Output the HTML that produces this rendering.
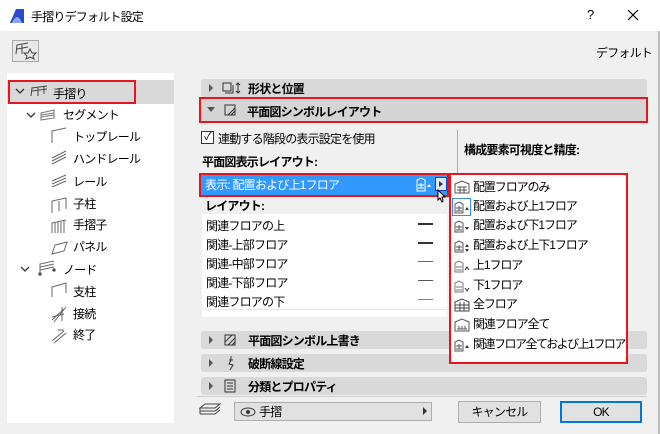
<!DOCTYPE html>
<html><head><meta charset="utf-8"><style>
*{margin:0;padding:0;box-sizing:border-box}
body{width:660px;height:434px;overflow:hidden;background:#f0f0f0;font-family:"Liberation Sans","Noto Sans CJK JP",sans-serif;font-size:12px;color:#000;position:relative;letter-spacing:-0.8px}
.a{position:absolute;white-space:nowrap}
.b{font-weight:bold}
.hdr{position:absolute;left:201px;width:446px;height:18px;background:#d9d9d9;border-radius:3px}
.hdr .t{position:absolute;left:47px;top:1px;font-weight:bold;font-size:12px}
.hdr .tri{position:absolute;left:8px;top:5px;width:0;height:0;border-left:4px solid #555;border-top:4px solid transparent;border-bottom:4px solid transparent}
.red{position:absolute;border:2px solid #e8141b}
.row{position:absolute;left:202px;width:245px;height:20px;background:#fff;border-bottom:1px solid #e6e6e6}
.row span{position:absolute;left:4px;top:3px}
.row i{position:absolute;left:216px;top:9px;width:15px;height:2px;background:#333}
.mi{position:absolute;left:473px;white-space:nowrap;z-index:6;letter-spacing:-1.1px}
.ic{position:absolute;left:454px;z-index:6}
</style></head><body>
<div class="a" style="left:0;top:0;width:660px;height:31px;background:#fff"></div>
<svg class="a" style="left:9px;top:8px" width="16" height="16"><path d="M1 15 L7 1 L15 1 L15 15 Z" fill="#2a4bd1"/><path d="M3 15 Q8 3 13 15Z" fill="#8aa8ff"/></svg>
<div class="a" style="left:31px;top:8px;font-size:12px">手摺りデフォルト設定</div>
<div class="a" style="left:587px;top:7px;font-size:13px">?</div>
<svg class="a" style="left:627px;top:9px" width="12" height="12"><path d="M1 1 L11 11 M11 1 L1 11" stroke="#000" stroke-width="1.2"/></svg>
<div class="a" style="left:658px;top:31px;width:2px;height:403px;background:#bbb"></div>
<div class="a" style="left:12px;top:40px;width:27px;height:22px;border:1px solid #aaa;background:#e8e8e8"></div>
<svg class="a" style="left:14px;top:42px" width="24" height="18" fill="none" stroke="#444"><path d="M2 12 L3 3 L14 1 M3 7 L14 5 M8 12 V3"/><path d="M16 7 L18 11 L22 11 L19 14 L20 17 L16 15 L12 17 L13 14 L10 11 L14 11Z"/></svg>
<div class="a" style="right:8px;top:44px">デフォルト</div>

<!-- left tree -->
<div class="a" style="left:7px;top:73px;width:167px;height:350px;background:#fff"></div>
<div class="a" style="left:7px;top:80px;width:167px;height:24px;background:#d9d9d9"></div>
<div class="red" style="left:8px;top:80px;width:128px;height:24px"></div>
<svg class="a" style="left:15px;top:88px" width="10" height="7"><path d="M1 1 L5 5 L9 1" stroke="#333" fill="none" stroke-width="1.3"/></svg>
<svg class="a" style="left:30px;top:85px" width="18" height="12"><path d="M1 11 L2 3 L17 1 M2 6 L17 4 M8 11 V3 M14 9 V2" stroke="#444" fill="none"/></svg>
<div class="a" style="left:53px;top:85px">手摺り</div>
<svg class="a" style="left:26px;top:112px" width="10" height="7"><path d="M1 1 L5 5 L9 1" stroke="#333" fill="none" stroke-width="1.3"/></svg>
<svg class="a" style="left:40px;top:109px" width="16" height="12"><path d="M1 4 L14 1 L14 9 L1 11Z M1 6 L14 4 M1 8 L14 6" stroke="#777" fill="none"/></svg>
<div class="a" style="left:63px;top:106px">セグメント</div>
<div class="a" style="left:73px;top:128px">トップレール</div>
<div class="a" style="left:73px;top:150px">ハンドレール</div>
<div class="a" style="left:73px;top:173px">レール</div>
<div class="a" style="left:73px;top:195px">子柱</div>
<div class="a" style="left:73px;top:216px">手摺子</div>
<div class="a" style="left:73px;top:238px">パネル</div>
<svg class="a" style="left:20px;top:266px" width="10" height="7"><path d="M1 1 L5 5 L9 1" stroke="#333" fill="none" stroke-width="1.3"/></svg>
<svg class="a" style="left:38px;top:260px" width="18" height="16" fill="none" stroke="#666"><path d="M2 14 V4 L16 1 M2 7 L16 4 M2 10 L16 7"/><circle cx="2" cy="14" r="1.3" fill="#333"/><circle cx="16" cy="10" r="1.3" fill="#333"/></svg>
<div class="a" style="left:63px;top:261px">ノード</div>
<div class="a" style="left:73px;top:283px">支柱</div>
<div class="a" style="left:73px;top:305px">接続</div>
<div class="a" style="left:73px;top:326px">終了</div>
<svg class="a" style="left:50px;top:127px" width="18" height="220" stroke="#666" fill="none">
<path d="M2 16 V4 L16 1"/>
<path d="M2 37 L16 30 M2 34 L16 27 M2 31 L16 24"/>
<path d="M2 60 L16 54 M2 57 L16 51 M2 54 L16 48"/>
<path d="M2 86 V74 L16 71 V82 M9 84 V74"/>
<path d="M2 106 V96 L16 93 M5 106 V96 M8 106 V95 M11 106 V95 M14 106 V94"/>
<path d="M2 127 L5 118 L17 115 L14 124 Z"/>
<path d="M2 170 V160 L16 156 V166"/>
<path d="M2 193 L14 182 M2 190 L14 187 M4 195 L16 180 M12 180 V194"/>
<path d="M2 214 L14 204 M4 216 L16 206 M8 203 L14 203"/>
</svg>

<!-- right -->
<div class="hdr" style="top:79px"><div class="tri"></div><div class="t" style="left:47px">形状と位置</div>
<svg class="a" style="left:20px;top:2px" width="22" height="14" fill="none" stroke="#333"><path d="M2 2 H10 V10 H2Z M4 12 H12 V4"/><path d="M17 2 V12 M15 4 L17 2 L19 4 M15 10 L17 12 L19 10"/></svg></div>
<div class="a" style="left:199px;top:97px;width:449px;height:26px;background:#d4d4d4"></div>
<div class="red" style="left:199px;top:97px;width:449px;height:26px"></div>
<div class="a" style="left:207px;top:107px;border-top:5px solid #555;border-left:4px solid transparent;border-right:4px solid transparent"></div>
<svg class="a" style="left:223px;top:103px" width="14" height="14"><path d="M2 2 H12 V12 H2Z M5 12 L12 5 M8 12 L12 8" stroke="#333" fill="none"/></svg>
<div class="a b" style="left:247px;top:103px">平面図シンボルレイアウト</div>
<div class="a" style="left:201px;top:131px;width:13px;height:13px;border:1px solid #333;background:#fff;font-size:11px;line-height:11px;text-align:center">✓</div>
<div class="a" style="left:218px;top:130px">連動する階段の表示設定を使用</div>
<div class="a b" style="left:202px;top:153px">平面図表示レイアウト:</div>
<div class="a" style="left:200px;top:174px;width:248px;height:22px;background:#3399ff"></div>
<div class="red" style="left:199px;top:173px;width:250px;height:24px"></div>
<div class="a" style="left:205px;top:176px;color:#fff">表示: 配置および上1フロア</div>
<svg class="a" style="left:416px;top:177px" width="16" height="15"><path d="M1 14 V3 L5 1 L9 3 V14Z M2 8 H8 M2 11 H8 M5 6 V11" stroke="#fff" fill="none"/><path d="M11 10 L13 7 L15 10Z" fill="#fff"/></svg>
<div class="a" style="left:435px;top:177px;width:12px;height:14px;background:#dfe8f5;border:1px solid #14c"></div>
<div class="a" style="left:439px;top:181px;border-left:4px solid #333;border-top:3px solid transparent;border-bottom:3px solid transparent"></div>
<svg class="a" style="left:437px;top:189px;z-index:7" width="10" height="14"><path d="M1 1 V11 L3 9 L5 13 L6 12 L5 8 H8Z" fill="#fff" stroke="#000"/></svg>
<div class="a b" style="left:205px;top:197px">レイアウト:</div>
<div class="row" style="top:214px"><span>関連フロアの上</span><i></i></div>
<div class="row" style="top:233px"><span>関連-上部フロア</span><i></i></div>
<div class="row" style="top:252px"><span>関連-中部フロア</span><i style="height:1px;background:#666"></i></div>
<div class="row" style="top:271px"><span>関連-下部フロア</span><i style="height:1px;background:#555"></i></div>
<div class="row" style="top:290px"><span>関連フロアの下</span><i style="height:1px;background:#888"></i></div>
<div class="a" style="left:202px;top:310px;width:245px;height:7px;background:#fff"></div>
<div class="a" style="left:457px;top:130px;width:1px;height:196px;background:#aaa"></div>
<div class="a b" style="left:464px;top:141px">構成要素可視度と精度:</div>

<div class="a" style="left:449px;top:173px;width:179px;height:191px;background:#fff;border:2px solid #e8141b;z-index:5"></div>
<svg class="ic" style="top:180px" width="16" height="14"><path d="M1 13 V4 L8 1 L15 4 V13Z M3 10 H13 M3 7 H13 M6 7 V13 M10 7 V13" stroke="#555" fill="none"/></svg><div class="mi" style="top:178px">配置フロアのみ</div>
<div class="ic" style="top:198px;left:452px;width:19px;height:18px;border:1px solid #3a8ee6"></div>
<svg class="ic" style="top:200px" width="16" height="14"><path d="M1 13 V4 L5 2 L9 4 V13Z M2 8 H8 M2 11 H8 M5 6 V11" stroke="#555" fill="none"/><path d="M11 10 L13 7 L15 10Z" fill="#333"/></svg><div class="mi" style="top:197px">配置および上1フロア</div>
<svg class="ic" style="top:219px" width="16" height="14"><path d="M1 13 V4 L5 2 L9 4 V13Z M2 8 H8 M2 11 H8 M5 6 V11" stroke="#555" fill="none"/><path d="M11 8 L13 11 L15 8Z" fill="#333"/></svg><div class="mi" style="top:216px">配置および下1フロア</div>
<svg class="ic" style="top:239px" width="16" height="14"><path d="M1 13 V4 L5 2 L9 4 V13Z M2 8 H8 M2 11 H8 M5 6 V11" stroke="#555" fill="none"/><path d="M11 8 L13 5 L15 8Z M11 10 L13 13 L15 10Z" fill="#333"/></svg><div class="mi" style="top:236px">配置および上下1フロア</div>
<svg class="ic" style="top:259px" width="16" height="14"><path d="M1 13 V4 L5 2 L9 4 V13Z M2 8 H8 M2 11 H8" stroke="#777" fill="none"/><path d="M11 11 L13 8 L15 11" stroke="#333" fill="none"/></svg><div class="mi" style="top:256px">上1フロア</div>
<svg class="ic" style="top:279px" width="16" height="14"><path d="M1 13 V4 L5 2 L9 4 V13Z M2 8 H8 M2 11 H8" stroke="#777" fill="none"/><path d="M11 9 L13 12 L15 9" stroke="#333" fill="none"/></svg><div class="mi" style="top:276px">下1フロア</div>
<svg class="ic" style="top:298px" width="16" height="14"><path d="M1 13 V4 L8 1 L15 4 V13Z M1 7 H15 M1 10 H15 M6 4 V13 M10 4 V13" stroke="#444" fill="none"/></svg><div class="mi" style="top:295px">全フロア</div>
<svg class="ic" style="top:318px" width="16" height="14"><path d="M1 13 V4 L8 1 L15 4 V13Z M3 11 H13 M5 8 V11 M8 8 V11 M11 8 V11" stroke="#555" fill="none"/></svg><div class="mi" style="top:315px">関連フロア全て</div>
<svg class="ic" style="top:338px" width="16" height="14"><path d="M1 13 V4 L5 2 L9 4 V13Z M2 8 H8 M2 11 H8 M5 6 V11" stroke="#555" fill="none"/><path d="M11 10 L13 7 L15 10Z" fill="#333"/></svg><div class="mi" style="top:335px;letter-spacing:-1.5px">関連フロア全ておよび上1フロア</div>

<div class="hdr" style="top:331px"><div class="tri"></div><div class="t">平面図シンボル上書き</div>
<svg class="a" style="left:22px;top:2px" width="14" height="14"><path d="M2 2 H12 V12 H2Z M2 9 L9 2 M5 12 L12 5 M9 12 L12 9" stroke="#333" fill="none"/></svg></div>
<div class="hdr" style="top:354px"><div class="tri"></div><div class="t">破断線設定</div>
<svg class="a" style="left:24px;top:1px" width="12" height="16"><path d="M6 1 V5 M4 5 H8 M6 5 L4 9 L8 10 L5 15" stroke="#333" fill="none"/></svg></div>
<div class="hdr" style="top:377px"><div class="tri"></div><div class="t">分類とプロパティ</div>
<svg class="a" style="left:23px;top:2px" width="12" height="14"><path d="M1 1 H11 V13 H1Z M3 4 H9 M3 7 H9 M3 10 H9" stroke="#333" fill="none"/></svg></div>
<div class="a" style="left:197px;top:396px;width:450px;height:1px;background:#ccc"></div>
<svg class="a" style="left:199px;top:403px" width="22" height="14" fill="none" stroke="#444"><path d="M1 5 L6 1 H21 L16 5Z M1 8 L1 5 M1 8 H16 L21 4 M1 11 H16 L21 7 M1 8 V11"/></svg>
<div class="a" style="left:234px;top:402px;width:198px;height:19px;background:#e1e1e1;border:1px solid #adadad"></div>
<svg class="a" style="left:240px;top:407px" width="16" height="10"><ellipse cx="8" cy="5" rx="7" ry="4" stroke="#333" fill="none"/><circle cx="8" cy="5" r="2" fill="#333"/></svg>
<div class="a" style="left:259px;top:403px">手摺</div>
<div class="a" style="left:423px;top:407px;border-left:4px solid #333;border-top:4px solid transparent;border-bottom:4px solid transparent"></div>
<div class="a" style="left:458px;top:401px;width:83px;height:22px;background:#e1e1e1;border:1px solid #adadad;text-align:center;line-height:20px">キャンセル</div>
<div class="a" style="left:560px;top:401px;width:82px;height:22px;background:#e1e1e1;border:2px solid #0078d7;text-align:center;line-height:18px">OK</div>
</body></html>
